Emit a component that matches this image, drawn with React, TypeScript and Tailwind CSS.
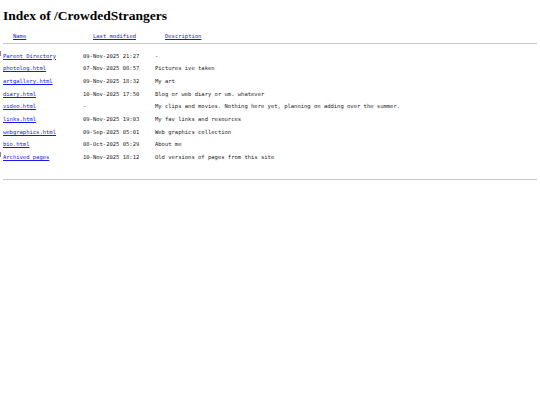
const rows: { name: string; date: string; desc: string; icon?: boolean }[] = [
  { name: "Parent Directory", date: "09-Nov-2025 21:27", desc: "-", icon: true },
  { name: "photolog.html", date: "07-Nov-2025 08:57", desc: "Pictures ive taken" },
  { name: "artgallery.html", date: "09-Nov-2025 18:32", desc: "My art" },
  { name: "diary.html", date: "10-Nov-2025 17:50", desc: "Blog or web diary or um. whatever" },
  { name: "video.html", date: "-", desc: "My clips and movies. Nothing here yet, planning on adding over the summer." },
  { name: "links.html", date: "09-Nov-2025 19:03", desc: "My fav links and resources" },
  { name: "webgraphics.html", date: "09-Sep-2025 05:01", desc: "Web graphics collection" },
  { name: "bio.html", date: "08-Oct-2025 05:29", desc: "About me" },
  { name: "Archived pages", date: "10-Nov-2025 18:12", desc: "Old versions of pages from this site", icon: true },
]

export default function App() {
  return (
    <div className="min-h-[405px] w-[540px] bg-white text-black">
      <h1 className="px-[3px] pt-[6px] font-['Liberation_Serif',serif] text-[13.5px] font-bold leading-[20px]">
        Index of /CrowdedStrangers
      </h1>

      <div className="mt-[4px] font-['DejaVu_Sans_Mono',monospace] text-[5.5px] leading-[12.6px]">
        <div className="flex pl-[13px]">
          <a href="#" className="w-[80px] text-[#1a1ae6] underline">Name</a>
          <a href="#" className="w-[72px] text-[#1a1ae6] underline">Last modified</a>
          <a href="#" className="text-[#1a1ae6] underline">Description</a>
        </div>
        <div className="mx-[3px] h-px bg-[#c8c8c8]" />

        <div className="pt-[6px]">
          {rows.map((row) => (
            <div key={row.name} className="flex h-[12.7px] items-center">
              <div className="flex w-[3px] items-start self-stretch">
                {row.icon && <span className="mt-[1px] h-[5px] w-px bg-[#8a8a8a]" />}
              </div>
              <a href="#" className="w-[80px] text-[#1a1ae6] underline">{row.name}</a>
              <span className="w-[72px] text-[#222]">{row.date}</span>
              <span className="text-[#222]">{row.desc}</span>
            </div>
          ))}
        </div>

        <div className="mx-[3px] mt-[15px] h-px bg-[#c8c8c8]" />
      </div>
    </div>
  )
}
